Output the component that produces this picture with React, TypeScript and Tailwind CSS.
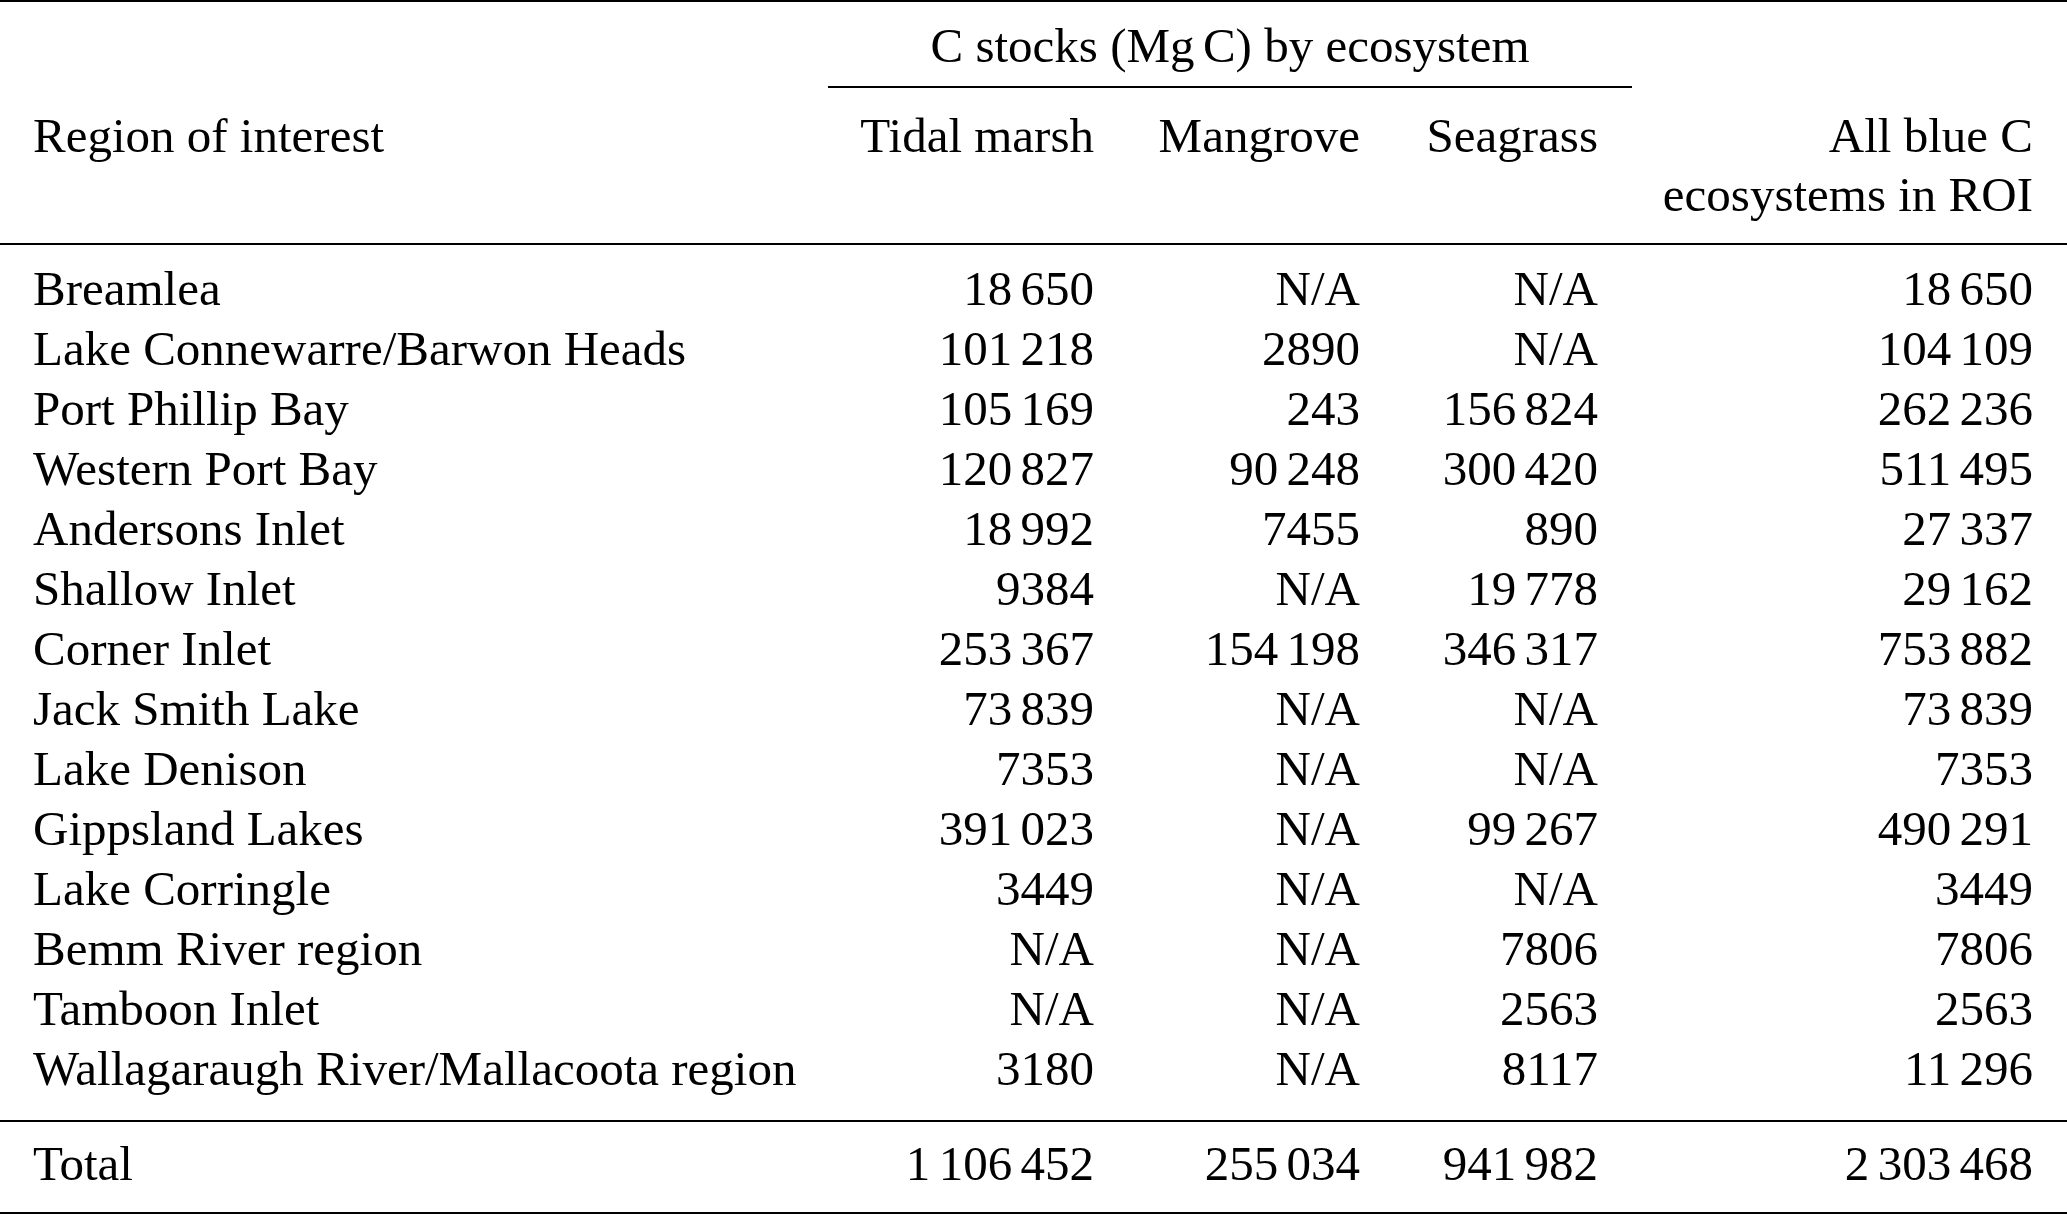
import React from "react";

const rows: [string, string, string, string, string][] = [
  ["Breamlea", "18 650", "N/A", "N/A", "18 650"],
  ["Lake Connewarre/Barwon Heads", "101 218", "2890", "N/A", "104 109"],
  ["Port Phillip Bay", "105 169", "243", "156 824", "262 236"],
  ["Western Port Bay", "120 827", "90 248", "300 420", "511 495"],
  ["Andersons Inlet", "18 992", "7455", "890", "27 337"],
  ["Shallow Inlet", "9384", "N/A", "19 778", "29 162"],
  ["Corner Inlet", "253 367", "154 198", "346 317", "753 882"],
  ["Jack Smith Lake", "73 839", "N/A", "N/A", "73 839"],
  ["Lake Denison", "7353", "N/A", "N/A", "7353"],
  ["Gippsland Lakes", "391 023", "N/A", "99 267", "490 291"],
  ["Lake Corringle", "3449", "N/A", "N/A", "3449"],
  ["Bemm River region", "N/A", "N/A", "7806", "7806"],
  ["Tamboon Inlet", "N/A", "N/A", "2563", "2563"],
  ["Wallagaraugh River/Mallacoota region", "3180", "N/A", "8117", "11 296"],
];

function Num({ v }: { v: string }) {
  const parts = v.split(" ");
  return (
    <>
      {parts.map((p, i) => (
        <React.Fragment key={i}>
          {i > 0 && <span className="inline-block w-[0.17em]" />}
          {p}
        </React.Fragment>
      ))}
    </>
  );
}

const grid = "grid grid-cols-[828px_300px_266px_238px_1fr]";

function Row({ r }: { r: string[] }) {
  return (
    <div className={grid}>
      <div className="pl-[33px] whitespace-nowrap">{r[0]}</div>
      {r.slice(1).map((c, i) => (
        <div key={i} className="text-right pr-[34px] whitespace-nowrap">
          <Num v={c} />
        </div>
      ))}
    </div>
  );
}

export default function App() {
  return (
    <div
      className="w-[2067px] h-[1215px] bg-white text-black text-[49px] leading-[60px]"
      style={{ fontFamily: '"Liberation Serif", "Times New Roman", serif' }}
    >
      <div className="h-[2px] bg-black" />
      {/* header */}
      <div className="pt-[14px]">
        <div className={grid}>
          <div className="col-start-2 col-span-3 text-center whitespace-nowrap">
            C stocks (Mg<span className="inline-block w-[0.17em]" />C) by ecosystem
          </div>
        </div>
        <div className={grid + " mt-[10px]"}>
          <div className="col-start-2 col-span-3 h-[2px] bg-black" />
        </div>
        <div className={grid + " mt-[18px] pb-[18px]"}>
          <div className="pl-[33px]">Region of interest</div>
          <div className="text-right pr-[34px]">Tidal marsh</div>
          <div className="text-right pr-[34px]">Mangrove</div>
          <div className="text-right pr-[34px]">Seagrass</div>
          <div className="text-right pr-[34px] whitespace-nowrap">
            <div>All blue C</div>
            <div className="-mt-[1px]">ecosystems in ROI</div>
          </div>
        </div>
      </div>
      <div className="h-[2px] bg-black" />
      <div className="pt-[14px] pb-[21px]">
        {rows.map((r, i) => (
          <Row key={i} r={r} />
        ))}
      </div>
      <div className="h-[2px] bg-black" />
      <div className="pt-[12px] pb-[18px]">
        <Row r={["Total", "1 106 452", "255 034", "941 982", "2 303 468"]} />
      </div>
      <div className="h-[2px] bg-black" />
    </div>
  );
}
